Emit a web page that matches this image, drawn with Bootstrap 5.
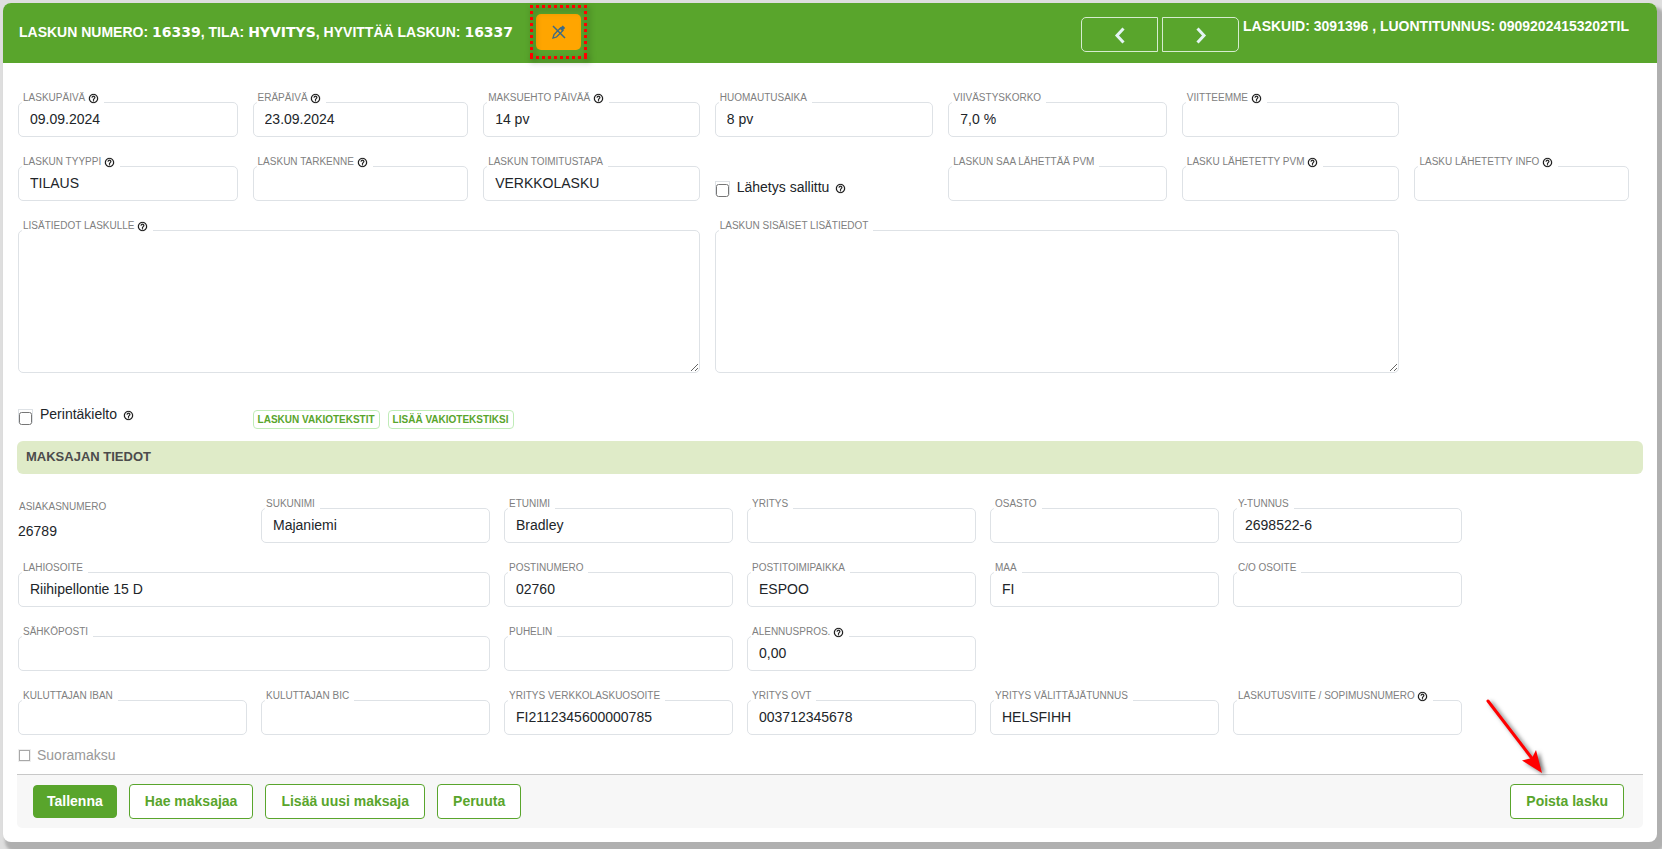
<!DOCTYPE html>
<html lang="fi">
<head>
<meta charset="utf-8">
<meta name="viewport" content="width=device-width, initial-scale=1">
<title>Laskun tiedot</title>
<link href="https://cdn.jsdelivr.net/npm/bootstrap@5.3.0/dist/css/bootstrap.min.css" rel="stylesheet">
<style>
  :root { --brand: #59a52c; }
  body { font-family: "Liberation Sans", Arial, sans-serif; font-size: 14px; line-height: 20px; color: #212529; background: #dedede; padding: 3px 5px 7px 3px; overflow-x: hidden; }
  .invoice { border: 0; border-radius: 8px; box-shadow: 5px 7px 3px 3px #b0b0b0; }
  .invoice-head { background: var(--brand); color: #fff; min-height: 60px; border-radius: 8px 8px 0 0; font-weight: 700; padding: 0 16px; }
  .head-left { padding-bottom: 2px; gap: 12px; }
  .head-title { min-width: 505px; }
  .head-title b { font-family: "DejaVu Sans", "Liberation Sans", sans-serif; font-weight: 700; line-height: 18px; }
  .head-right { padding-top: 14px; gap: 4px; }
  .head-right > span { line-height: 18px; min-width: 398px; }
  .step { width: 77px; height: 35px; border: 1px solid #d6ecd0; color: #e4f4f4; border-radius: 5px 0 0 5px; padding: 0; }
  .step + .step { border-radius: 0 5px 5px 0; }
  .edit-off { width: 45px; height: 36px; background: #ffa500; color: #3d6a86; border: 0; border-radius: 5px; padding: 0; }
  .frame { position: absolute; left: -6px; top: -9px; overflow: visible; filter: drop-shadow(2px 3px 3px rgba(0,0,0,.5)); pointer-events: none; }
  .invoice-body { padding: 27px 14px 14px 15px; }
  .fields { display: grid; row-gap: 17px; }
  .fields-a { grid-template-columns: 220fr 216fr 217fr 219fr 219fr 218fr 215fr; column-gap: 15px; padding-right: 14px; }
  .fields-b { grid-template-columns: repeat(6, 1fr); column-gap: 14px; padding-top: 22px; margin-right: 181px; }
  .w2 { grid-column: span 2; }
  .w3 { grid-column: span 3; }
  .field { display: flex; flex-direction: column; align-items: flex-start; min-width: 0; }
  .field label, .caption { font-size: 10px; line-height: 14px; color: #808080; white-space: nowrap; }
  .field label { background: #fff; margin: 0 0 -3px 4px; padding: 1px 5px 0 1px; position: relative; z-index: 1; }
  .field .form-control { font-size: 14px; line-height: 20px; height: 35px; padding: 6px 11px 7px; border: 1px solid #dee2e6; border-radius: 5px; color: #212529; }
  .field textarea.form-control { height: 143px; resize: both; }
  .q { width: 11px; height: 11px; fill: #111; stroke: #111; stroke-width: .5; vertical-align: -3px; }
  .tick { display: flex; align-items: flex-start; gap: 7px; }
  .tick-box { display: flex; width: 15px; height: 14px; border: 1px solid #dee2e6; }
  .tick-box input { width: 13px; height: 13px; flex: none; margin: 2px 0 0; }
  .tick-send { padding-top: 26px; }
  .tick-send .tick-box, .tick-row .tick-box { margin-top: 1px; }
  .tick-send label { line-height: 14px; }
  .tick .q { vertical-align: -2px; margin-left: 2px; }
  .tick-row { padding-top: 35px; padding-bottom: 13px; height: 68px; }
  .tick-row label { line-height: 13px; }
  .mini { font-size: 10px; line-height: 14px; font-weight: 700; color: var(--brand); border: 1px solid #c0ecb8; border-radius: 4px; background: #fff; padding: 1px 4px; white-space: nowrap; height: 19px; margin-top: 2px; }
  .section-bar { background: #dfebc8; color: #4c4c4c; font-size: 13px; line-height: 20px; font-weight: 700; border-radius: 6px; padding: 6px 10px 7px 9px; margin: 0 0 0 -1px; }
  .caption { padding: 4px 0 7px 1px; }
  .direct { color: #999; gap: 7px; padding: 10px 0 9px 1px; height: 39px; }
  .direct input { width: 11px; height: 11px; margin: 0; appearance: none; border: 1px solid #a8a8a8; box-shadow: 0 0 0 1px #eee; }
  .actions { background: #f7f7f7; border-top: 1px solid #c8c8c8; border-radius: 0 0 5px 5px; padding: 9px 19px 9px 16px; margin-left: -1px; gap: 12px; }
  .act { height: 35px; border: 1px solid var(--brand); border-radius: 4px; color: var(--brand); background: #fff; font-size: 14px; line-height: 18px; font-weight: 700; padding: 6px 15px 8px; }
  .act-main { background: var(--brand); color: #fff; height: 33px; padding: 6px 13px 7px; }
  .pointer { position: absolute; left: -28px; bottom: 100%; overflow: visible; filter: drop-shadow(3px 2px 2px rgba(0,0,0,.55)); pointer-events: none; }
</style>
</head>
<body>
<svg width="0" height="0" class="position-absolute" aria-hidden="true">
  <symbol id="help" viewBox="0 0 24 24"><path d="M11 18h2v-2h-2v2zm1-16C6.48 2 2 6.48 2 12s4.480 10 10 10 10-4.480 10-10S17.520 2 12 2zm0 18c-4.410 0-8-3.590-8-8s3.590-8 8-8 8 3.590 8 8-3.590 8-8 8zm0-14c-2.210 0-4 1.790-4 4h2c0-1.100.9-2 2-2s2 .9 2 2c0 2-3 1.750-3 5h2c0-2.250 3-2.500 3-5 0-2.210-1.790-4-4-4z"/></symbol>
</svg>

<main class="card invoice">
  <header class="invoice-head d-flex justify-content-between">
    <div class="d-flex align-items-center head-left">
      <span class="head-title">LASKUN NUMERO: <b>16339</b>, TILA: <b>HYVITYS</b>, HYVITTÄÄ LASKUN: <b>16337</b></span>
      <span class="position-relative d-inline-flex">
        <button type="button" class="btn edit-off d-flex align-items-center justify-content-center" aria-label="Poista muokkaus">
          <svg width="14" height="14" viewBox="0 0 14 14" fill="none" stroke="currentColor"><path d="M1 13l1-3.500L8.500 3l2.500 2.500L4.500 12z" stroke-width="1.300"/><path d="M8.800 4.800L12 1.800" stroke-width="3.600"/><path d="M1 1l12 12" stroke-width="1.500"/></svg>
        </button>
        <svg class="frame" width="57" height="54" fill="none" stroke="#f00" stroke-width="3" stroke-dasharray="3 3"><path d="M0 1.500H57M0 52.500H57M1.500 0V54M55.500 0V54"/></svg>
      </span>
    </div>
    <div class="d-flex align-items-start head-right">
      <button type="button" class="btn step" aria-label="Edellinen"><svg width="12" height="17" viewBox="0 0 12 17" fill="none" stroke="currentColor" stroke-width="3"><path d="M9.500 1.500L3 8.500l6.500 7"/></svg></button>
      <button type="button" class="btn step" aria-label="Seuraava"><svg width="12" height="17" viewBox="0 0 12 17" fill="none" stroke="currentColor" stroke-width="3"><path d="M2.500 1.500L9 8.500l-6.500 7"/></svg></button>
      <span>LASKUID: 3091396 , LUONTITUNNUS: 09092024153202TIL</span>
    </div>
  </header>

  <form class="invoice-body">
    <div class="fields fields-a">
      <div class="field"><label for="f1">LASKUPÄIVÄ <svg class="q"><use href="#help"/></svg></label><input id="f1" class="form-control" value="09.09.2024"></div>
      <div class="field"><label for="f2">ERÄPÄIVÄ <svg class="q"><use href="#help"/></svg></label><input id="f2" class="form-control" value="23.09.2024"></div>
      <div class="field"><label for="f3">MAKSUEHTO PÄIVÄÄ <svg class="q"><use href="#help"/></svg></label><input id="f3" class="form-control" value="14 pv"></div>
      <div class="field"><label for="f4">HUOMAUTUSAIKA</label><input id="f4" class="form-control" value="8 pv"></div>
      <div class="field"><label for="f5">VIIVÄSTYSKORKO</label><input id="f5" class="form-control" value="7,0 %"></div>
      <div class="field"><label for="f6">VIITTEEMME <svg class="q"><use href="#help"/></svg></label><input id="f6" class="form-control"></div>
      <div></div>

      <div class="field"><label for="f7">LASKUN TYYPPI <svg class="q"><use href="#help"/></svg></label><input id="f7" class="form-control" value="TILAUS"></div>
      <div class="field"><label for="f8">LASKUN TARKENNE <svg class="q"><use href="#help"/></svg></label><input id="f8" class="form-control"></div>
      <div class="field"><label for="f9">LASKUN TOIMITUSTAPA</label><input id="f9" class="form-control" value="VERKKOLASKU"></div>
      <div class="tick tick-send"><span class="tick-box"><input type="checkbox" id="c1"></span><label for="c1">Lähetys sallittu <svg class="q"><use href="#help"/></svg></label></div>
      <div class="field"><label for="f10">LASKUN SAA LÄHETTÄÄ PVM</label><input id="f10" class="form-control"></div>
      <div class="field"><label for="f11">LASKU LÄHETETTY PVM <svg class="q"><use href="#help"/></svg></label><input id="f11" class="form-control"></div>
      <div class="field"><label for="f12">LASKU LÄHETETTY INFO <svg class="q"><use href="#help"/></svg></label><input id="f12" class="form-control"></div>

      <div class="field w3"><label for="f13">LISÄTIEDOT LASKULLE <svg class="q"><use href="#help"/></svg></label><textarea id="f13" class="form-control"></textarea></div>
      <div class="field w3"><label for="f14">LASKUN SISÄISET LISÄTIEDOT</label><textarea id="f14" class="form-control"></textarea></div>
    </div>

    <div class="fields fields-a tick-row">
      <div class="tick"><span class="tick-box"><input type="checkbox" id="c2"></span><label for="c2">Perintäkielto <svg class="q"><use href="#help"/></svg></label></div>
      <div class="w3 d-flex align-items-start gap-2">
        <button type="button" class="mini">LASKUN VAKIOTEKSTIT</button>
        <button type="button" class="mini">LISÄÄ VAKIOTEKSTIKSI</button>
      </div>
    </div>

    <h2 class="section-bar">MAKSAJAN TIEDOT</h2>

    <div class="fields fields-b">
      <div><div class="caption">ASIAKASNUMERO</div><div>26789</div></div>
      <div class="field"><label for="g1">SUKUNIMI</label><input id="g1" class="form-control" value="Majaniemi"></div>
      <div class="field"><label for="g2">ETUNIMI</label><input id="g2" class="form-control" value="Bradley"></div>
      <div class="field"><label for="g3">YRITYS</label><input id="g3" class="form-control"></div>
      <div class="field"><label for="g4">OSASTO</label><input id="g4" class="form-control"></div>
      <div class="field"><label for="g5">Y-TUNNUS</label><input id="g5" class="form-control" value="2698522-6"></div>

      <div class="field w2"><label for="g6">LAHIOSOITE</label><input id="g6" class="form-control" value="Riihipellontie 15 D"></div>
      <div class="field"><label for="g7">POSTINUMERO</label><input id="g7" class="form-control" value="02760"></div>
      <div class="field"><label for="g8">POSTITOIMIPAIKKA</label><input id="g8" class="form-control" value="ESPOO"></div>
      <div class="field"><label for="g9">MAA</label><input id="g9" class="form-control" value="FI"></div>
      <div class="field"><label for="g10">C/O OSOITE</label><input id="g10" class="form-control"></div>

      <div class="field w2"><label for="g11">SÄHKÖPOSTI</label><input id="g11" class="form-control"></div>
      <div class="field"><label for="g12">PUHELIN</label><input id="g12" class="form-control"></div>
      <div class="field"><label for="g13">ALENNUSPROS. <svg class="q"><use href="#help"/></svg></label><input id="g13" class="form-control" value="0,00"></div>
      <div class="w2"></div>

      <div class="field"><label for="g14">KULUTTAJAN IBAN</label><input id="g14" class="form-control"></div>
      <div class="field"><label for="g15">KULUTTAJAN BIC</label><input id="g15" class="form-control"></div>
      <div class="field"><label for="g16">YRITYS VERKKOLASKUOSOITE</label><input id="g16" class="form-control" value="FI2112345600000785"></div>
      <div class="field"><label for="g17">YRITYS OVT</label><input id="g17" class="form-control" value="003712345678"></div>
      <div class="field"><label for="g18">YRITYS VÄLITTÄJÄTUNNUS</label><input id="g18" class="form-control" value="HELSFIHH"></div>
      <div class="field"><label for="g19">LASKUTUSVIITE / SOPIMUSNUMERO <svg class="q"><use href="#help"/></svg></label><input id="g19" class="form-control"></div>
    </div>

    <div class="d-flex align-items-center direct"><input type="checkbox" id="c3" disabled><label for="c3">Suoramaksu</label></div>

    <footer class="actions d-flex align-items-center">
      <button type="submit" class="act act-main">Tallenna</button>
      <button type="button" class="act">Hae maksajaa</button>
      <button type="button" class="act">Lisää uusi maksaja</button>
      <button type="button" class="act">Peruuta</button>
      <span class="position-relative ms-auto d-inline-flex">
        <button type="button" class="act">Poista lasku</button>
        <svg class="pointer" width="70" height="90" fill="#f00"><path d="M6 7L52 67" stroke="#f00" stroke-width="3" stroke-linecap="round"/><path d="M60 79L40 66.500L50 64L54 56z"/></svg>
      </span>
    </footer>
  </form>
</main>
<script src="https://cdn.jsdelivr.net/npm/bootstrap@5.3.0/dist/js/bootstrap.bundle.min.js"></script>
</body>
</html>
